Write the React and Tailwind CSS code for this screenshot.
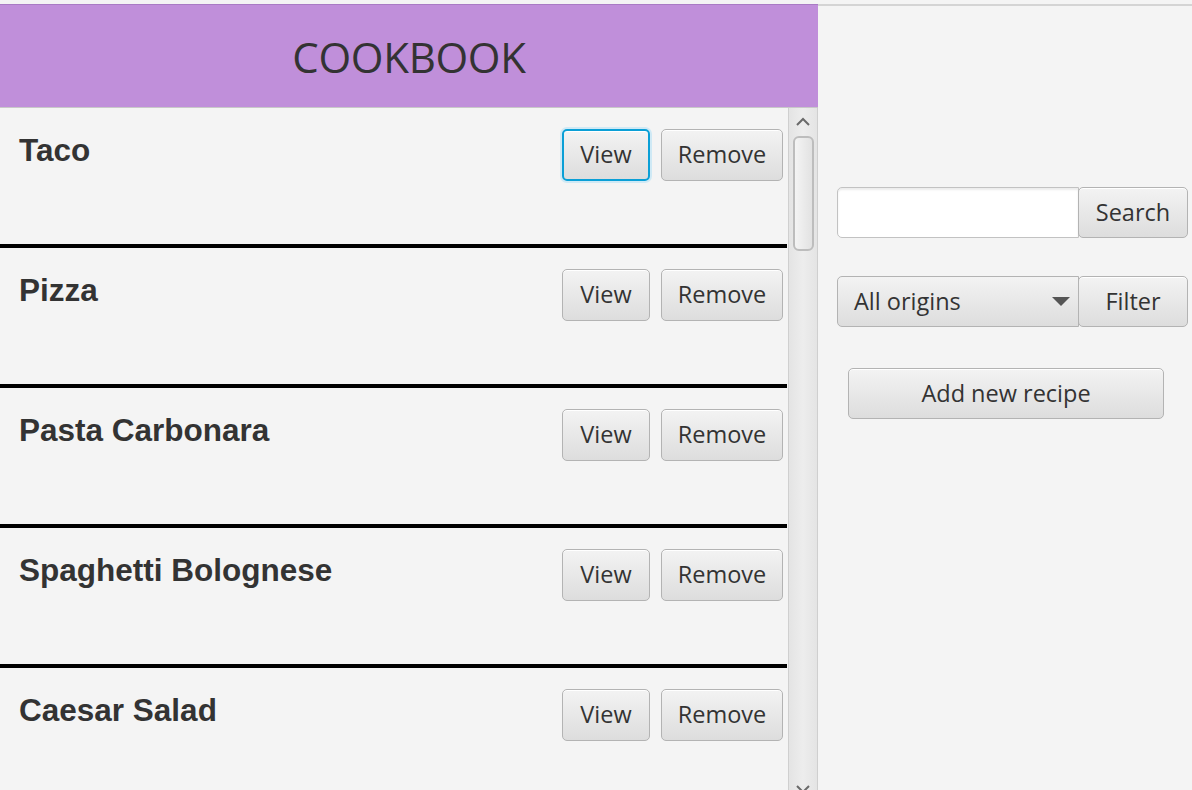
import React from 'react';

const recipes = ['Taco', 'Pizza', 'Pasta Carbonara', 'Spaghetti Bolognese', 'Caesar Salad'];

const btnBase =
  "flex items-center justify-center rounded-[5px] bg-gradient-to-b from-[#f3f3f3] to-[#dddddd] text-[#333333] text-[23.5px] shadow-[inset_0_1px_0_#ffffff]";
const btn = btnBase + " border border-[#b3b3b3]";

function RecipeRow({ name, focused }) {
  return (
    <div className="h-[140px] shrink-0 flex flex-col">
      <div className="flex-1 flex items-start justify-between pt-[21px] pl-[19px] pr-[5px]">
        <span className="mt-[5px] text-[31.5px] leading-[32px] font-bold text-[#333333] font-['Liberation_Sans',Arial,sans-serif]">
          {name}
        </span>
        <div className="flex gap-[11px]">
          <button
            className={
              focused
                ? btnBase + " h-[52px] w-[88px] border-2 border-[#0a9fd6] ring-2 ring-[#cfe9f5]"
                : btn + " h-[52px] w-[88px]"
            }
          >
            View
          </button>
          <button className={btn + " h-[52px] w-[122px]"}>Remove</button>
        </div>
      </div>
      <div className="h-[4px] bg-black mr-[1px]" />
    </div>
  );
}

function ScrollBar() {
  return (
    <div className="w-[30px] shrink-0 flex flex-col items-center bg-gradient-to-r from-[#e4e4e4] via-[#ededed] to-[#e4e4e4] border-l border-r border-[#cfcfcf]">
      <svg width="16" height="10" viewBox="0 0 16 10" className="mt-[9px]">
        <path d="M2 8 L8 2 L14 8" fill="none" stroke="#6a6a6a" strokeWidth="2" />
      </svg>
      <div className="mt-[9px] w-[21px] h-[115px] rounded-[6px] border-2 border-[#bdbdbd] bg-gradient-to-r from-[#f4f4f4] to-[#e2e2e2]" />
      <div className="flex-1" />
      <svg width="16" height="10" viewBox="0 0 16 10" className="mb-[-4px]">
        <path d="M2 2 L8 8 L14 2" fill="none" stroke="#6a6a6a" strokeWidth="2" />
      </svg>
    </div>
  );
}

export default function App() {
  return (
    <div className="w-[1192px] h-[790px] overflow-hidden bg-[#f4f4f4] pt-[4px] flex font-['Open_Sans',sans-serif]">
      {/* Left: header + list */}
      <div className="w-[818px] shrink-0 flex flex-col">
        <div className="h-[104px] shrink-0 bg-[#c08fda] border-t border-[#a97bc4] border-b border-b-[#c8c8c8] flex items-center justify-center">
          <span className="text-[42px] text-[#333333] tracking-[-0.3px]">COOKBOOK</span>
        </div>
        <div className="flex-1 flex overflow-hidden">
          <div className="w-[788px] shrink-0 flex flex-col">
            {recipes.map((r, i) => (
              <RecipeRow key={r} name={r} focused={i === 0} />
            ))}
          </div>
          <ScrollBar />
        </div>
      </div>

      {/* Right: controls */}
      <div className="flex-1 border-t-2 border-[#d4d4d4] flex flex-col pl-[19px] pr-[4px]">
        <div className="mt-[181px] flex h-[51px]">
          <div className="w-[242px] h-full rounded-l-[5px] border border-[#c2c2c2] bg-white shadow-[inset_0_2px_2px_#ececec]" />
          <button className={btn + " h-[51px] w-[110px] -ml-[1px]"}>Search</button>
        </div>
        <div className="mt-[38px] flex h-[51px]">
          <div className="w-[242px] h-full rounded-l-[5px] border border-[#b3b3b3] bg-gradient-to-b from-[#f3f3f3] to-[#dddddd] flex items-center justify-between pl-[16px] pr-[8px]">
            <span className="text-[23.5px] text-[#333333]">All origins</span>
            <svg width="18" height="10" viewBox="0 0 18 10">
              <path d="M0 0 L18 0 L9 9 Z" fill="#555555" />
            </svg>
          </div>
          <button className={btn + " h-[51px] w-[110px] -ml-[1px]"}>Filter</button>
        </div>
        <div className="mt-[41px] ml-[11px]">
          <button className={btn + " h-[51px] w-[316px]"}>Add new recipe</button>
        </div>
      </div>
    </div>
  );
}
